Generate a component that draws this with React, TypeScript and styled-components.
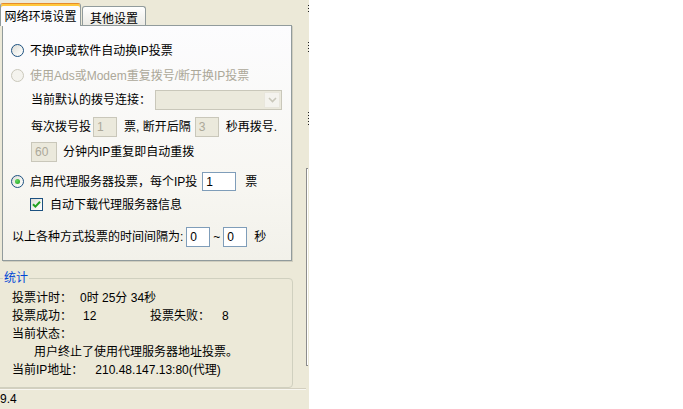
import React from "react";
import styled, { createGlobalStyle } from "styled-components";

const GlobalStyle = createGlobalStyle`
  html, body {
    margin: 0;
    padding: 0;
    background: #ffffff;
  }
  body {
    font-family: "Liberation Sans", "Noto Sans CJK SC", sans-serif;
    font-size: 12px;
    color: #000;
  }
`;

const Screen = styled.div`
  display: flex;
  width: 683px;
  height: 409px;
  overflow: hidden;
`;

const LeftPane = styled.div`
  width: 306px;
  height: 100%;
  box-sizing: border-box;
  padding-left: 2px;
  background: #ece9d8;
  display: flex;
  flex-direction: column;
  overflow: hidden;
`;

const Splitter = styled.div`
  width: 3px;
  height: 100%;
  background: #ece9d8;
  display: flex;
  flex-direction: column;
`;

const Dots = styled.span<{ $top: number; $h: number }>`
  display: block;
  align-self: flex-end;
  width: 1px;
  height: ${(p) => p.$h}px;
  margin-top: ${(p) => p.$top}px;
  background: repeating-linear-gradient(to bottom, #222 0 1px, transparent 1px 3px);
`;

const Bracket = styled.span`
  display: block;
  width: 2px;
  height: 198px;
  margin-top: 43px;
  box-sizing: border-box;
  border: 1px solid #8c8c8c;
  border-right: none;
  background: #fff;
`;

const RightPane = styled.div`
  flex: 1;
  background: #fff;
`;

const TabStrip = styled.div`
  display: flex;
  align-items: flex-end;
  height: 25px;
  position: relative;
  z-index: 1;
`;

const Tab = styled.div<{ $active?: boolean }>`
  box-sizing: border-box;
  display: flex;
  align-items: center;
  justify-content: center;
  border: 1px solid #919b9c;
  border-bottom: none;
  border-radius: 3px 3px 0 0;
  ${(p) =>
    p.$active
      ? `
    width: 81px;
    height: 23px;
    margin-left: -2px;
    margin-bottom: -1px;
    padding-top: 2px;
    background: #fcfcfe;
    border-top: 1px solid #e68b2c;
    box-shadow: inset 0 2px 0 #ffc83c;
  `
      : `
    width: 64px;
    height: 19px;
    margin-left: 1px;
    padding-top: 3px;
    background: linear-gradient(#ffffff, #ecebe6);
  `}
`;

const Panel = styled.div`
  width: 290px;
  height: 238px;
  box-sizing: border-box;
  border: 1px solid #919b9c;
  background: linear-gradient(#fcfcfe 0%, #f7f6f1 70%, #f2f1ea 100%);
  box-shadow: 1px 1px 0 #d0cebf;
  padding: 15px 0 0 8px;
  display: flex;
  flex-direction: column;
`;

const Row = styled.div<{ $mt?: number; $indent?: number }>`
  display: flex;
  align-items: center;
  height: 20px;
  margin-top: ${(p) => p.$mt ?? 0}px;
  padding-left: ${(p) => p.$indent ?? 0}px;
  white-space: nowrap;
`;

const Text = styled.span<{ $ml?: number; $disabled?: boolean }>`
  margin-left: ${(p) => p.$ml ?? 0}px;
  padding-top: 1px;
  color: ${(p) => (p.$disabled ? "#aca899" : "#000")};
  line-height: 14px;
`;

const Radio = styled.span<{ $checked?: boolean; $disabled?: boolean }>`
  position: relative;
  flex: none;
  width: 13px;
  height: 13px;
  box-sizing: border-box;
  border-radius: 50%;
  border: 1px solid ${(p) => (p.$disabled ? "#cac8bb" : "#1c5180")};
  background: ${(p) =>
    p.$disabled
      ? "#f4f3ee"
      : "linear-gradient(135deg, #dcdcd7 0%, #f4f4f0 60%, #ffffff 100%)"};

  &::after {
    content: "";
    display: ${(p) => (p.$checked ? "block" : "none")};
    position: absolute;
    left: 3px;
    top: 3px;
    width: 5px;
    height: 5px;
    border-radius: 50%;
    background: radial-gradient(circle at 35% 35%, #62d85e 0%, #21a121 100%);
  }
`;

const CheckBox = styled.span`
  flex: none;
  display: flex;
  align-items: center;
  justify-content: center;
  width: 13px;
  height: 13px;
  box-sizing: border-box;
  border: 1px solid #1c5180;
  background: linear-gradient(135deg, #dcdcd7 0%, #f4f4f0 60%, #ffffff 100%);
`;

const Field = styled.span<{ $w: number; $h?: number; $ml?: number; $disabled?: boolean }>`
  flex: none;
  display: inline-flex;
  align-items: center;
  box-sizing: border-box;
  width: ${(p) => p.$w}px;
  height: ${(p) => p.$h ?? 20}px;
  margin-left: ${(p) => p.$ml ?? 0}px;
  padding-left: 3px;
  border: 1px solid ${(p) => (p.$disabled ? "#c9c7ba" : "#7f9db9")};
  background: ${(p) => (p.$disabled ? "#ebe9dc" : "#ffffff")};
  color: ${(p) => (p.$disabled ? "#aca899" : "#000")};
  font-family: "Liberation Sans", sans-serif;
`;

const Combo = styled.span<{ $ml?: number }>`
  flex: none;
  display: flex;
  justify-content: flex-end;
  align-items: center;
  box-sizing: border-box;
  width: 127px;
  height: 20px;
  margin-left: ${(p) => p.$ml ?? 0}px;
  padding-right: 1px;
  border: 1px solid #c9c7ba;
  background: #ebe9dc;
`;

const ComboButton = styled.span`
  display: flex;
  align-items: center;
  justify-content: center;
  width: 16px;
  height: 16px;
  box-sizing: border-box;
  border: 1px solid #e8e6dc;
  background: #f4f3ee;
`;

const Group = styled.fieldset`
  box-sizing: border-box;
  width: 298px;
  margin: 10px 0 0 -7px;
  padding: 0 0 8px 0;
  border: 1px solid #d0d0bf;
  border-radius: 4px;
`;

const Legend = styled.legend`
  margin-left: 7px;
  padding: 0 1px;
  color: #0046d5;
  line-height: 14px;
`;

const StatList = styled.div`
  padding: 4px 0 0 16px;
`;

const StatRow = styled.div<{ $indent?: number }>`
  height: 18px;
  line-height: 18px;
  padding-left: ${(p) => p.$indent ?? 0}px;
  white-space: nowrap;
`;

const StatValue = styled.span<{ $ml?: number; $w?: number }>`
  display: inline-block;
  margin-left: ${(p) => p.$ml ?? 0}px;
  width: ${(p) => (p.$w ? `${p.$w}px` : "auto")};
`;

const StatusBar = styled.div`
  margin: 0 0 0 -2px;
  height: 20px;
  line-height: 21px;
  border-top: 1px solid #d3cfbf;
  box-shadow: inset 0 1px 0 #f8f7f1;
  font-family: "Liberation Sans", sans-serif;
`;

const Chevron = () => (
  <svg width="9" height="6" viewBox="0 0 9 6">
    <path d="M1 1 L4.5 4.5 L8 1" fill="none" stroke="#c9c7ba" strokeWidth="1.6" />
  </svg>
);

const Tick = () => (
  <svg width="9" height="9" viewBox="0 0 9 9">
    <path d="M1 4.2 L3.4 6.6 L8 1.8" fill="none" stroke="#21a121" strokeWidth="2" />
  </svg>
);

export default function App() {
  return (
    <>
      <GlobalStyle />
      <Screen>
        <LeftPane>
          <TabStrip>
            <Tab $active>网络环境设置</Tab>
            <Tab>其他设置</Tab>
          </TabStrip>
          <Panel>
            <Row>
              <Radio />
              <Text $ml={6}>不换IP或软件自动换IP投票</Text>
            </Row>
            <Row $mt={5}>
              <Radio $disabled />
              <Text $ml={6} $disabled>
                使用Ads或Modem重复拨号/断开换IP投票
              </Text>
            </Row>
            <Row $mt={4} $indent={20}>
              <Text>当前默认的拨号连接：</Text>
              <Combo $ml={4}>
                <ComboButton>
                  <Chevron />
                </ComboButton>
              </Combo>
            </Row>
            <Row $mt={7} $indent={20}>
              <Text>每次拨号投</Text>
              <Field $w={24} $ml={2} $disabled>
                1
              </Field>
              <Text $ml={7}>票, 断开后隔</Text>
              <Field $w={24} $ml={4} $disabled>
                3
              </Field>
              <Text $ml={7}>秒再拨号.</Text>
            </Row>
            <Row $mt={5} $indent={20}>
              <Field $w={26} $disabled>
                60
              </Field>
              <Text $ml={6}>分钟内IP重复即自动重拨</Text>
            </Row>
            <Row $mt={10}>
              <Radio $checked />
              <Text $ml={6}>启用代理服务器投票，每个IP投</Text>
              <Field $w={34} $h={19} $ml={5}>
                1
              </Field>
              <Text $ml={9}>票</Text>
            </Row>
            <Row $mt={3} $indent={19}>
              <CheckBox>
                <Tick />
              </CheckBox>
              <Text $ml={7}>自动下载代理服务器信息</Text>
            </Row>
            <Row $mt={12} $indent={1}>
              <Text>以上各种方式投票的时间间隔为:</Text>
              <Field $w={24} $ml={3}>
                0
              </Field>
              <Text $ml={3}>~</Text>
              <Field $w={24} $ml={3}>
                0
              </Field>
              <Text $ml={7}>秒</Text>
            </Row>
          </Panel>
          <Group>
            <Legend>统计</Legend>
            <StatList>
              <StatRow>
                投票计时：
                <StatValue $ml={8}>0时 25分 34秒</StatValue>
              </StatRow>
              <StatRow>
                投票成功：
                <StatValue $ml={11} $w={67}>
                  12
                </StatValue>
                投票失败：
                <StatValue $ml={12}>8</StatValue>
              </StatRow>
              <StatRow>当前状态：</StatRow>
              <StatRow $indent={22}>用户终止了使用代理服务器地址投票。</StatRow>
              <StatRow>
                当前IP地址：
                <StatValue $ml={12}>210.48.147.13:80(代理)</StatValue>
              </StatRow>
            </StatList>
          </Group>
          <StatusBar>9.4</StatusBar>
        </LeftPane>
        <Splitter>
          <Dots $top={5} $h={8} />
          <Dots $top={29} $h={10} />
          <Dots $top={60} $h={13} />
          <Bracket />
        </Splitter>
        <RightPane />
      </Screen>
    </>
  );
}
